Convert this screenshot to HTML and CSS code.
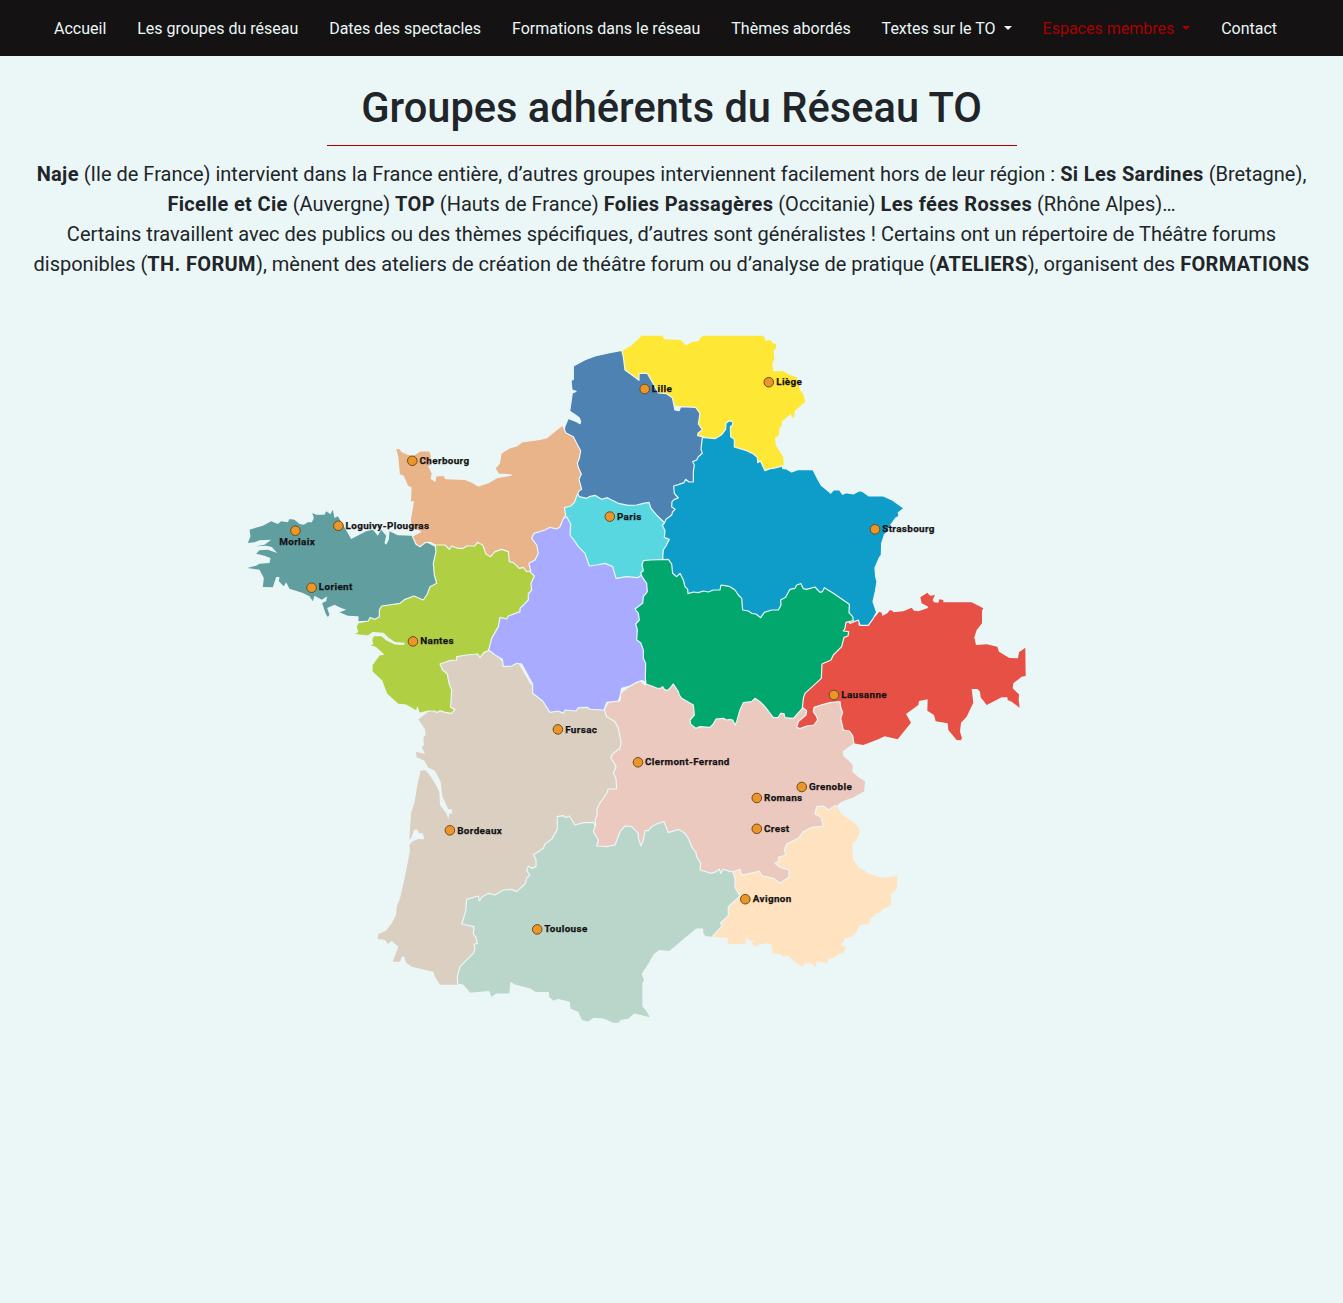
FILE: index.html
```
<!DOCTYPE html>
<html lang="fr">
<head>
<meta charset="utf-8">
<title>Groupes adhérents du Réseau TO</title>
<link rel="stylesheet" href="styles.css">
</head>
<body>
<nav class="navbar">
  <a class="nav-link">Accueil</a>
  <a class="nav-link">Les groupes du réseau</a>
  <a class="nav-link">Dates des spectacles</a>
  <a class="nav-link">Formations dans le réseau</a>
  <a class="nav-link">Thèmes abordés</a>
  <a class="nav-link dropdown">Textes sur le TO </a>
  <a class="nav-link dropdown members">Espaces membres </a>
  <a class="nav-link">Contact</a>
</nav>
<main>
  <h1 class="title">Groupes adhérents du Réseau TO</h1>
  <hr class="rule">
  <p class="intro"><b>Naje</b> (Ile de France) intervient dans la France entière, d’autres groupes interviennent facilement hors de leur région : <b>Si Les Sardines</b> (Bretagne),<br><b>Ficelle et Cie</b> (Auvergne) <b>TOP</b> (Hauts de France) <b>Folies Passagères</b> (Occitanie) <b>Les fées Rosses</b> (Rhône Alpes)…<br>Certains travaillent avec des publics ou des thèmes spécifiques, d’autres sont généralistes ! Certains ont un répertoire de Théâtre forums<br>disponibles (<b>TH. FORUM</b>), mènent des ateliers de création de théâtre forum ou d’analyse de pratique (<b>ATELIERS</b>), organisent des <b>FORMATIONS</b></p>
  <svg class="map" viewBox="235 320 805 715" width="805" height="715">
    <g class="regions">
      <path class="base" fill="#ffe835" transform="translate(550 320) scale(.33333)" d="M216,93 245,76 275,47 337,47 343,58 392,60 408,76 425,67 445,63 457,47 641,47 647,63 662,60 668,70 678,72 678,84 671,92 673,118 667,130 670,154 700,153 715,163 740,172 750,210 760,222 766,245 735,272 731,297 722,282 695,305 695,318 688,325 687,345 675,355 677,375 700,412 701,435 690,455 640,460 600,430 540,400 500,370 430,360 430,270 350,250 280,190 200,160Z"/>
      <path class="base" fill="#58d7e0" d="M575,493 590,490 655,495 680,515 675,560 655,568 640,585 612,585 585,575 563,530 560,515 560,505Z"/>
      <path class="base" fill="#609ea0" transform="translate(234.5 489.7) scale(.33333)" d="M532,138 490,137 465,125 463,150 455,165 450,160 455,138 440,120 430,138 415,120 395,125 350,148 325,105 310,80 300,85 295,60 288,74 275,65 270,75 245,75 233,70 238,85 232,98 220,98 208,105 195,103 180,90 165,88 160,98 140,95 130,103 110,95 85,108 45,120 48,140 40,160 60,158 75,152 110,150 90,165 65,170 95,168 112,172 128,190 100,180 75,182 65,192 90,198 108,205 105,220 75,222 65,228 38,235 75,240 88,265 85,292 115,293 125,262 135,262 133,275 148,290 155,278 165,297 205,310 225,320 235,335 240,318 262,330 278,320 275,335 263,340 270,362 275,375 280,382 285,375 278,355 300,345 320,355 335,360 315,368 340,378 372,380 372,395 390,393 420,400 450,360 560,340 620,290 620,180 560,150Z"/>
      <path class="base" fill="#dbcfc2" transform="translate(370 640) scale(.33333)" d="M230,210 190,210 175,215 145,238 165,268 167,285 160,293 162,315 155,322 165,342 150,338 138,335 140,352 163,362 175,383 195,392 212,425 217,470 235,508 245,508 247,522 238,520 235,538 230,522 210,495 208,455 195,430 175,400 165,390 152,392 143,430 133,490 123,520 118,600 125,590 132,570 142,568 147,580 158,580 163,598 145,597 128,604 118,615 120,632 107,700 90,775 80,800 78,825 65,850 48,872 25,882 23,897 45,900 53,912 65,903 85,920 68,965 90,965 95,950 103,950 108,968 125,980 190,995 195,1010 210,1034 262,1034 285,1000 330,920 300,840 310,790 450,770 500,690 580,560 620,560 690,555 710,490 750,460 755,380 745,345 770,305 760,250 720,190 690,195 540,200 480,130 440,60 400,70 360,20 320,30 200,60 220,100Z"/>
      <path class="base" fill="#ffe2c0" transform="translate(700 790) scale(.33333)" d="M410,48 425,72 460,97 475,110 480,125 470,150 457,160 459,207 475,232 510,253 545,263 592,258 590,298 572,312 574,345 545,360 540,368 530,370 510,388 508,402 480,405 470,425 455,440 435,445 425,465 437,472 432,488 410,495 405,503 385,507 382,520 350,513 348,532 330,518 315,520 308,530 290,520 265,498 250,500 240,492 218,490 215,465 200,460 185,462 165,470 155,460 163,450 150,452 140,443 135,462 84,462 82,443 30,440 50,410 70,370 75,340 105,315 90,285 85,235 150,225 220,240 200,200 240,150 330,90 350,30Z"/>
      <path class="base" fill="#e75044" transform="translate(790 580) scale(.33333)" d="M150,130 200,118 208,122 205,136 233,135 245,118 255,110 268,95 275,98 277,108 292,100 300,90 307,92 310,97 340,94 365,83 372,92 385,94 412,85 415,80 395,70 391,52 412,38 420,47 435,45 428,60 432,67 445,68 448,58 460,60 460,67 545,67 580,85 576,92 576,130 560,150 553,172 558,195 590,193 622,200 627,215 658,234 684,235 687,217 706,203 707,288 695,290 670,310 668,325 687,343 686,360 689,383 665,365 653,360 652,352 635,352 590,375 572,352 570,335 563,327 545,327 550,368 530,410 513,428 510,455 516,475 512,481 500,480 475,450 473,430 437,424 432,405 412,392 413,358 387,363 385,375 348,402 363,428 323,478 284,469 265,478 220,495 190,490 180,480 120,430 20,460 15,420 20,370 30,340 80,290 85,250 140,200 150,150Z"/>
      <path fill="#4e82b3" transform="translate(550 320) scale(.33333)" d="M215,91 175,99 135,108 105,119 70,138 70,178 63,181 66,210 78,214 67,219 59,274 75,284 88,294 92,305 90,311 80,305 55,295 45,318 40,340 60,380 70,530 80,515 88,530 110,535 118,530 135,526 155,538 172,533 185,540 205,550 235,556 260,555 280,550 297,547 303,565 318,583 335,600 345,609 400,600 400,500 450,480 470,400 470,355 457,350 443,347 444,340 457,329 445,312 450,280 437,262 392,260 387,272 375,270 367,233 350,221 325,219 312,195 292,160 267,160 267,181 250,168 225,150 223,135 220,110Z"/>
      <path fill="#b1cf43" transform="translate(340 520) scale(.33333)" d="M285,72 288,95 280,130 283,165 290,190 270,200 262,222 250,240 222,228 195,238 180,250 125,258 118,270 118,290 105,298 90,293 85,303 55,308 48,320 53,335 40,343 85,348 98,338 130,340 145,355 165,368 193,370 190,373 165,372 140,360 125,347 100,347 95,360 98,372 86,376 108,383 130,403 118,405 96,435 96,455 125,482 140,522 173,552 198,555 230,574 232,562 238,580 250,577 265,573 285,573 290,578 300,572 315,577 335,580 345,568 332,562 335,510 327,490 322,462 308,450 300,432 330,422 350,420 350,410 380,405 413,402 420,412 432,397 446,392 470,360 490,310 550,280 590,220 600,165 560,130 500,80 420,50 340,60Z"/>
      <path fill="#bad6ca" transform="translate(450 800) scale(.33333)" d="M23,552 22,530 30,500 42,488 70,460 75,445 72,433 82,430 78,412 70,402 72,380 35,372 47,335 50,298 85,288 88,303 97,290 115,280 135,285 160,270 185,268 200,275 225,252 230,235 240,225 230,212 235,198 245,205 258,200 258,178 250,165 280,145 285,132 305,118 322,88 322,50 340,47 347,53 358,48 375,75 400,68 430,67 460,120 490,120 510,60 540,60 575,100 590,60 640,50 700,80 760,190 840,200 848,215 855,235 855,262 870,288 835,320 835,347 812,368 815,380 800,395 785,412 765,410 758,400 758,387 740,387 700,420 680,437 658,455 628,452 612,464 598,490 577,522 584,540 579,550 579,618 589,630 604,655 572,647 553,642 537,657 512,662 508,670 488,670 460,657 432,655 415,667 395,662 383,637 360,627 358,607 325,599 310,604 296,592 295,578 255,577 240,567 195,555 182,548 180,582 140,582 123,593 117,575 60,580 38,555Z"/>
      <path fill="#0e9cc9" transform="translate(640 410) scale(.33333)" d="M187,82 225,86 245,74 257,58 258,40 268,32 279,36 277,46 271,50 272,80 283,88 283,111 320,122 340,132 352,142 353,158 361,152 375,182 390,176 400,175 420,170 427,167 428,175 440,177 455,186 475,178 519,179 532,205 544,226 572,249 580,240 598,239 608,253 618,248 640,252 658,242 667,244 687,258 730,258 757,270 792,295 775,308 777,319 767,324 752,345 742,365 733,375 725,400 724,435 718,443 705,473 707,500 711,515 706,545 699,575 710,607 700,625 685,646 660,646 655,630 630,640 600,590 540,560 480,540 440,570 430,620 360,640 300,620 280,560 240,545 150,570 130,540 100,510 90,470 68,445 70,420 78,408 88,388 73,382 75,362 67,345 73,340 78,328 95,315 98,305 105,298 95,290 96,275 103,268 115,264 103,250 101,228 115,224 132,218 137,208 147,216 160,216 160,185 163,165 158,155 170,150 175,140 187,130 183,118 185,100Z"/>
      <path fill="#ebc9bf" transform="translate(590 670) scale(.33333)" d="M43,118 55,95 90,93 92,70 110,55 130,43 150,32 165,45 180,30 250,20 325,100 320,150 370,150 385,130 430,135 450,80 495,65 570,125 600,125 625,100 637,112 650,122 648,135 625,155 620,172 630,176 650,168 672,165 683,150 680,140 670,125 672,112 700,103 720,98 750,95 752,112 758,128 752,145 760,180 778,183 788,197 792,222 775,234 760,245 762,258 777,270 790,285 789,305 807,320 827,333 824,365 790,384 755,397 740,410 735,407 715,420 700,408 680,410 675,432 693,442 700,468 665,472 640,485 625,505 590,522 583,540 588,555 565,562 567,573 555,580 570,592 597,600 597,622 570,640 550,625 515,617 508,603 480,610 455,615 450,598 435,603 420,605 400,597 392,610 388,597 378,605 365,610 330,600 332,580 320,560 318,548 305,530 295,505 285,490 265,478 235,488 222,455 200,462 185,470 175,482 165,482 160,510 153,528 145,505 145,490 125,470 105,468 90,485 75,525 50,530 20,528 25,510 10,485 17,465 15,450 22,435 20,420 28,402 50,370 55,357 80,357 78,325 70,310 78,290 62,262 70,250 90,235 93,215 85,175 75,155 50,140Z"/>
      <path fill="#a8abff" transform="translate(340 520) scale(.33333)" d="M446,390 455,355 475,320 480,292 500,297 505,288 540,275 540,265 565,240 565,222 575,210 573,190 583,168 570,155 560,130 560,60 570,20 650,5 680,-10 692,12 690,45 705,65 715,80 735,100 748,138 770,135 795,130 818,140 828,175 860,170 893,173 905,165 940,160 940,200 910,260 920,380 930,490 905,482 890,487 870,498 845,505 840,530 835,543 800,547 792,570 750,568 742,562 715,563 708,573 675,570 670,580 655,573 630,577 608,543 578,520 578,493 545,432 530,430 515,438 490,440 487,418 465,405Z"/>
      <path fill="#eab48b" transform="translate(380 410) scale(.33333)" d="M46,115 60,116 65,124 85,133 100,136 120,123 149,122 154,135 152,165 147,170 157,190 154,206 165,213 168,198 192,196 197,206 255,208 275,216 295,228 325,218 350,203 395,195 355,192 345,175 358,160 363,130 388,114 410,108 425,96 480,88 500,83 525,63 548,45 557,68 580,80 590,100 602,122 598,145 592,160 596,175 604,192 597,208 605,238 597,243 590,258 583,278 572,288 553,293 557,315 548,330 540,350 530,357 510,352 495,360 462,370 455,385 470,405 475,430 465,450 447,460 452,483 440,485 430,472 418,475 400,458 388,455 385,425 365,418 345,425 332,440 318,432 308,405 292,397 285,408 260,408 250,415 235,415 215,408 208,418 195,405 165,405 150,397 135,398 120,410 108,403 97,378 122,365 103,358 92,355 91,330 100,275 91,278 93,233 83,229 70,199 58,194 53,140Z"/>
      <path fill="#02a76d" transform="translate(620 550) scale(.33333)" d="M70,32 90,30 145,28 155,42 158,70 170,80 180,70 190,90 195,110 203,118 204,131 220,126 235,128 250,123 265,126 280,120 300,120 303,105 315,107 330,110 345,120 355,135 365,145 368,180 385,183 395,190 408,192 422,203 433,187 455,180 475,180 483,165 482,150 497,142 510,118 525,115 530,105 543,101 550,116 560,118 585,111 600,127 607,125 613,113 640,130 688,163 687,188 698,200 700,212 678,217 675,235 670,243 686,245 684,258 672,262 665,290 640,315 633,330 606,342 604,385 555,430 550,445 547,475 520,505 495,503 492,491 482,490 475,502 460,503 445,483 430,465 420,455 405,445 395,455 370,458 360,480 350,515 345,525 338,510 330,508 320,510 310,505 288,507 280,522 270,532 240,530 227,535 212,523 210,510 223,495 220,465 185,445 178,435 175,425 160,402 152,412 142,422 133,418 128,410 122,415 110,414 95,408 78,402 76,385 77,340 70,325 70,300 62,278 50,270 52,240 47,222 58,210 55,190 45,177 68,160 70,140 82,125 80,100 66,80 62,68 70,62 66,45Z"/>
    </g>
    <g class="towns">
      <circle cx="644.7" cy="389" r="4.8"/><circle cx="768.8" cy="382.2" r="4.8"/><circle cx="412.3" cy="460.8" r="4.8"/><circle cx="609.8" cy="516.6" r="4.8"/><circle cx="338.4" cy="525.8" r="4.8"/><circle cx="295.4" cy="530.7" r="4.8"/><circle cx="311.6" cy="587.7" r="4.8"/><circle cx="875" cy="529.3" r="4.8"/><circle cx="413" cy="641.4" r="4.8"/><circle cx="834" cy="695" r="4.8"/><circle cx="557.9" cy="729.4" r="4.8"/><circle cx="638" cy="762.3" r="4.8"/><circle cx="801.8" cy="787" r="4.8"/><circle cx="756.8" cy="798" r="4.8"/><circle cx="756.8" cy="828.8" r="4.8"/><circle cx="449.9" cy="830.3" r="4.8"/><circle cx="745.3" cy="899.2" r="4.8"/><circle cx="537.2" cy="929.4" r="4.8"/>
    </g>
    <g class="labels">
      <text x="651.8" y="392">Lille</text><text x="776.2" y="385">Liège</text><text x="419.5" y="464">Cherbourg</text><text x="616.9" y="520">Paris</text><text x="345.5" y="529">Loguivy-Plougras</text><text x="279.2" y="545">Morlaix</text><text x="318.8" y="590">Lorient</text><text x="882.2" y="532">Strasbourg</text><text x="420.2" y="644">Nantes</text><text x="841.2" y="698">Lausanne</text><text x="565.2" y="733">Fursac</text><text x="645" y="765">Clermont-Ferrand</text><text x="809" y="790">Grenoble</text><text x="764" y="801">Romans</text><text x="764" y="832">Crest</text><text x="457.2" y="834">Bordeaux</text><text x="752.8" y="902">Avignon</text><text x="544.2" y="932">Toulouse</text>
    </g>
  </svg>
</main>
</body>
</html>
```
FILE: styles.css
```
* { box-sizing: border-box; }
body {
  margin: 0;
  min-height: 1303px;
  background: #ebf7f7;
  color: #212529;
  font-family: Roboto, sans-serif;
  font-size: 16px;
  line-height: 1.5;
}
.navbar {
  display: flex;
  align-items: center;
  gap: 30.9px;
  height: 56px;
  padding: 1px 0 0 54px;
  background: #141213;
  white-space: nowrap;
}
.nav-link { color: #ebf7f7; }
.dropdown::after {
  content: "";
  display: inline-block;
  margin-left: 4.1px;
  vertical-align: 4px;
  border-top: 4.8px solid;
  border-left: 4.8px solid transparent;
  border-right: 4.8px solid transparent;
}
.members { color: #a00; }
main {
  display: flex;
  flex-direction: column;
  align-items: center;
}
.title {
  margin: 27px 0 0;
  font-size: 41.6px;
  font-weight: 500;
  line-height: 49px;
}
.rule {
  width: 690px;
  height: 1px;
  margin: 13px 0;
  border: 0;
  background: #a00;
}
.intro {
  margin: 0;
  font-size: 20px;
  line-height: 30px;
  text-align: center;
  white-space: nowrap;
}
.intro b { letter-spacing: .34px; }
.map {
  display: block;
  align-self: flex-start;
  margin: 41px 0 0 235px;
}
.regions path {
  stroke: #ebf7f7;
  stroke-width: 1.2px;
  stroke-linejoin: round;
  vector-effect: non-scaling-stroke;
}
.regions .base { stroke: none; }
.towns circle {
  fill: #eb9628;
  stroke: #6f4b1c;
  stroke-width: 1px;
}
.labels text {
  font-size: 9.9px;
  font-weight: 700;
  letter-spacing: .36px;
  fill: #141213;
  stroke: #141213;
  stroke-width: .25px;
}
```
